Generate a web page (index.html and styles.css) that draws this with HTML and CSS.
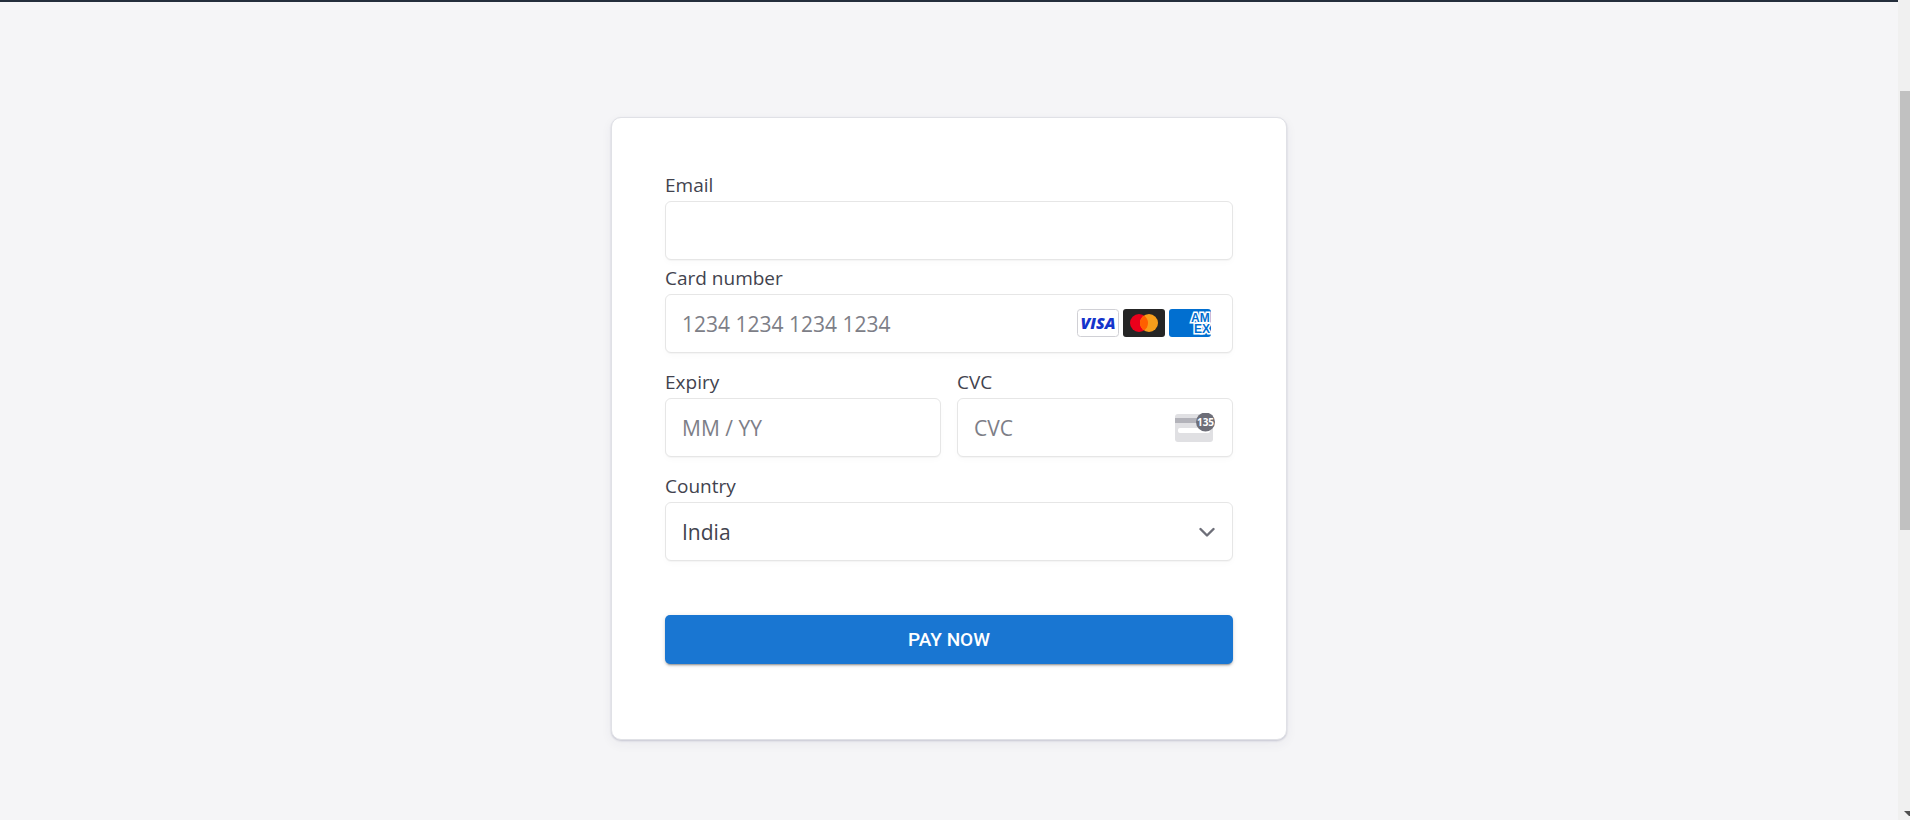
FILE: index.html
```html
<!DOCTYPE html>
<html lang="en">
<head>
<meta charset="utf-8">
<meta name="viewport" content="width=device-width, initial-scale=1">
<title>Payment</title>
<link rel="stylesheet" href="styles.css">
</head>
<body>
<main class="page">
  <form class="card">
    <div class="field field-email">
      <label class="label" for="email">Email</label>
      <div class="control"><input class="input" id="email" type="email"></div>
    </div>
    <div class="field">
      <label class="label" for="number">Card number</label>
      <div class="control">
        <input class="input" id="number" type="text" inputmode="numeric" placeholder="1234 1234 1234 1234">
        <div class="brands">
          <svg class="brand" viewBox="0 0 42 28" role="img" aria-label="Visa">
            <rect x=".5" y=".5" width="41" height="27" rx="3" fill="#fff" stroke="#d0d0d5"/>
            <text class="visa" x="21" y="20" text-anchor="middle">VISA</text>
          </svg>
          <svg class="brand" viewBox="0 0 42 28" role="img" aria-label="Mastercard">
            <rect width="42" height="28" rx="3" fill="#252525"/>
            <circle cx="16" cy="14" r="9" fill="#eb001b"/>
            <circle cx="26" cy="14" r="9" fill="#f79e1b"/>
            <path d="M21 6.500a9 9 0 0 1 0 15a9 9 0 0 1 0-15z" fill="#ff5f00"/>
          </svg>
          <svg class="brand" viewBox="0 0 42 28" role="img" aria-label="American Express">
            <rect width="42" height="28" rx="3" fill="#016fd0"/>
            <text class="amex" x="22" y="13">AM</text>
            <text class="amex" x="25" y="24">EX</text>
          </svg>
        </div>
      </div>
    </div>
    <div class="row">
      <div class="field">
        <label class="label" for="expiry">Expiry</label>
        <div class="control"><input class="input" id="expiry" type="text" placeholder="MM / YY"></div>
      </div>
      <div class="field">
        <label class="label" for="cvc">CVC</label>
        <div class="control">
          <input class="input" id="cvc" type="text" placeholder="CVC">
          <svg class="cvc-icon" viewBox="0 0 40 30" aria-hidden="true">
            <rect y="1" width="38" height="28" rx="3" fill="#e0e0e3"/>
            <rect y="5" width="38" height="5" fill="#b3b3ba"/>
            <rect x="3" y="15" width="32" height="5" rx="2" fill="#fff"/>
            <circle cx="30.500" cy="9" r="9.500" fill="#6d6e78"/>
            <text class="cvc-digits" x="30.500" y="13" text-anchor="middle">135</text>
          </svg>
        </div>
      </div>
    </div>
    <div class="field">
      <label class="label" for="country">Country</label>
      <div class="control">
        <select class="input select" id="country"><option>India</option></select>
        <svg class="chevron" viewBox="0 0 16 10" aria-hidden="true"><path d="M1.500 2L8 8.500l6.500-6.500" fill="none" stroke="#6d6e78" stroke-width="2.400" stroke-linecap="round" stroke-linejoin="round"/></svg>
      </div>
    </div>
    <button class="pay" type="button">PAY NOW</button>
  </form>
</main>
<aside class="scroll" aria-hidden="true">
  <div class="thumb"></div>
  <svg class="arrow" viewBox="0 0 6 5"><path d="M0 0h6v5H5z" fill="#505050"/></svg>
</aside>
</body>
</html>
```
FILE: styles.css
```css
* { box-sizing: border-box; }

body {
  margin: 0;
  min-height: 100vh;
  display: flex;
  background: #f5f5f7;
  color: #42434e;
  font-family: "Open Sans", "Noto Sans", sans-serif;
}

.page {
  flex: 1;
  padding: 115px 24px 80px;
  border-top: 2px solid #242e3c;
}

.card {
  display: flex;
  flex-direction: column;
  gap: 15px;
  max-width: 676px;
  margin: 0 auto;
  padding: 53px 53px 75px;
  border: 1px solid #e0e1e6;
  border-radius: 10px;
  background: #fff;
  box-shadow: 0 1px 2px rgba(50, 50, 93, 0.2), 0 4px 12px rgba(50, 50, 93, 0.06);
}

.row {
  display: grid;
  grid-template-columns: 1fr 1fr;
  gap: 16px;
}

.field { min-width: 0; }
.field-email { margin-bottom: -11px; }

.label {
  display: block;
  margin-bottom: 2px;
  font-size: 19px;
  line-height: 28px;
}

.control {
  display: flex;
  align-items: center;
  height: 59px;
  padding-right: 17px;
  border: 1px solid #e6e6e6;
  border-radius: 6px;
  background: #fff;
  box-shadow: 0 1px 1px rgba(0, 0, 0, 0.03), 0 3px 6px rgba(0, 0, 0, 0.02);
}

.input {
  flex: 1;
  min-width: 0;
  height: 100%;
  padding: 0 0 0 16px;
  border: 0;
  outline: 0;
  background: transparent;
  color: #42434e;
  font-family: inherit;
  font-size: 21px;
}

.input::placeholder {
  color: #7d7e87;
  opacity: 1;
}

.select { appearance: none; }

.brands {
  display: flex;
  gap: 4px;
  padding: 0 4px 2px 0;
}

.brand {
  width: 42px;
  height: 28px;
}

.visa {
  fill: #1434cb;
  font: italic 800 16px "Open Sans", sans-serif;
}

.amex {
  fill: #016fd0;
  stroke: #fff;
  stroke-width: 3px;
  paint-order: stroke;
  font: 700 12px/1 "Liberation Sans", sans-serif;
}

.cvc-icon {
  width: 40px;
  height: 30px;
}

.cvc-digits {
  fill: #fff;
  font: 700 10px "Open Sans", sans-serif;
}

.chevron {
  width: 16px;
  height: 10px;
}

.pay {
  height: 49px;
  margin-top: 39px;
  border: 0;
  border-radius: 5px;
  background: #1976d2;
  color: #fff;
  font-family: Roboto, sans-serif;
  font-size: 19px;
  font-weight: 500;
  box-shadow: 0 3px 1px -2px rgba(0, 0, 0, 0.2), 0 2px 2px rgba(0, 0, 0, 0.14), 0 1px 5px rgba(0, 0, 0, 0.12);
}

.scroll {
  display: flex;
  flex-direction: column;
  align-items: flex-end;
  justify-content: space-between;
  width: 12px;
  padding: 91px 0 4px;
  background: #f0f0f0;
}

.thumb {
  width: 10px;
  height: 439px;
  background: #c1c1c1;
}

.arrow {
  width: 6px;
  height: 5px;
}
```
